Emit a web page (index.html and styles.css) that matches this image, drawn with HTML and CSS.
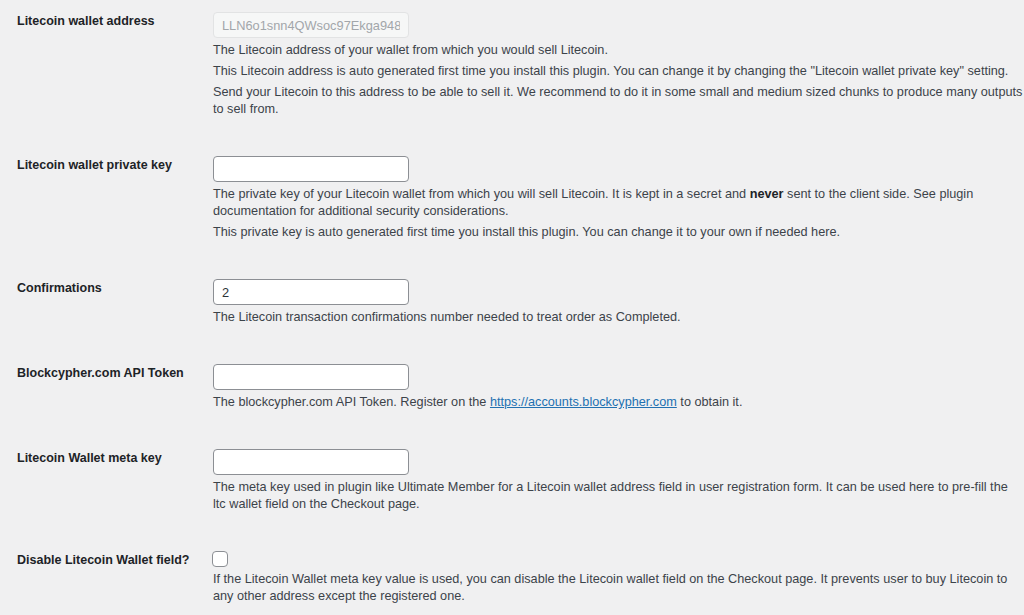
FILE: index.html
```html
<!DOCTYPE html>
<html lang="en">
<head>
<meta charset="utf-8">
<title>Litecoin settings</title>
<link rel="stylesheet" href="styles.css">
</head>
<body>
<div class="form-table">
  <div class="row">
    <div class="th">Litecoin wallet address</div>
    <div class="td">
      <input class="text" type="text" value="LLN6o1snn4QWsoc97Ekga948cbJtt5ZX6h" disabled>
      <div class="desc">
        <p>The Litecoin address of your wallet from which you would sell Litecoin.</p>
        <p>This Litecoin address is auto generated first time you install this plugin. You can change it by changing the "Litecoin wallet private key" setting.</p>
        <p>Send your Litecoin to this address to be able to sell it. We recommend to do it in some small and medium sized chunks to produce many outputs to sell from.</p>
      </div>
    </div>
  </div>
  <div class="row">
    <div class="th">Litecoin wallet private key</div>
    <div class="td">
      <input class="text" type="password" value="">
      <div class="desc">
        <p>The private key of your Litecoin wallet from which you will sell Litecoin. It is kept in a secret and <strong>never</strong> sent to the client side. See plugin documentation for additional security considerations.</p>
        <p>This private key is auto generated first time you install this plugin. You can change it to your own if needed here.</p>
      </div>
    </div>
  </div>
  <div class="row">
    <div class="th">Confirmations</div>
    <div class="td">
      <input class="text" type="text" value="2">
      <div class="desc">
        <p>The Litecoin transaction confirmations number needed to treat order as Completed.</p>
      </div>
    </div>
  </div>
  <div class="row">
    <div class="th">Blockcypher.com API Token</div>
    <div class="td">
      <input class="text" type="text" value="">
      <div class="desc">
        <p>The blockcypher.com API Token. Register on the <a href="#">https://accounts.blockcypher.com</a> to obtain it.</p>
      </div>
    </div>
  </div>
  <div class="row">
    <div class="th">Litecoin Wallet meta key</div>
    <div class="td">
      <input class="text" type="text" value="">
      <div class="desc">
        <p>The meta key used in plugin like Ultimate Member for a Litecoin wallet address field in user registration form. It can be used here to pre-fill the ltc wallet field on the Checkout page.</p>
      </div>
    </div>
  </div>
  <div class="row">
    <div class="th">Disable Litecoin Wallet field?</div>
    <div class="td">
      <input class="check" type="checkbox">
      <div class="desc">
        <p>If the Litecoin Wallet meta key value is used, you can disable the Litecoin wallet field on the Checkout page. It prevents user to buy Litecoin to any other address except the registered one.</p>
      </div>
    </div>
  </div>
</div>
</body>
</html>
```
FILE: styles.css
```css
html, body {
  margin: 0;
  padding: 0;
  background: #f0f0f1;
}
body {
  font-family: "Liberation Sans", Arial, sans-serif;
  color: #3c434a;
  font-size: 12.7px;
}
.form-table {
  padding: 12px 0 0 17px;
  display: flex;
  flex-direction: column;
  gap: 38px;
}
.row {
  display: grid;
  grid-template-columns: 196px 1fr;
}
.th {
  font-size: 12.5px;
  font-weight: 700;
  color: #1d2327;
  line-height: 16px;
  padding-top: 1px;
}
.td {
  padding-right: 1px;
  min-width: 0;
}
.text {
  display: block;
  box-sizing: border-box;
  width: 196px;
  height: 26px;
  margin: 0;
  padding: 0 8px;
  border: 1px solid #8c8f94;
  border-radius: 4px;
  background: #fff;
  color: #2c3338;
  font-family: "Liberation Sans", Arial, sans-serif;
  font-size: 12.8px;
  outline: none;
}
.text:disabled {
  background: #f6f7f7;
  border-color: #e2e3e4;
  color: #a2a6aa;
}
.check {
  display: block;
  appearance: none;
  -webkit-appearance: none;
  box-sizing: border-box;
  width: 16px;
  height: 16px;
  margin: 0 0 0 -1px;
  border: 1px solid #8c8f94;
  border-radius: 4px;
  background: #fff;
}
.desc {
  margin-top: 4px;
  display: flex;
  flex-direction: column;
  gap: 4px;
}
.desc p {
  margin: 0;
  line-height: 17px;
}
.desc strong {
  color: #1d2327;
}
.desc a {
  color: #2271b1;
  text-decoration: underline;
}
```
